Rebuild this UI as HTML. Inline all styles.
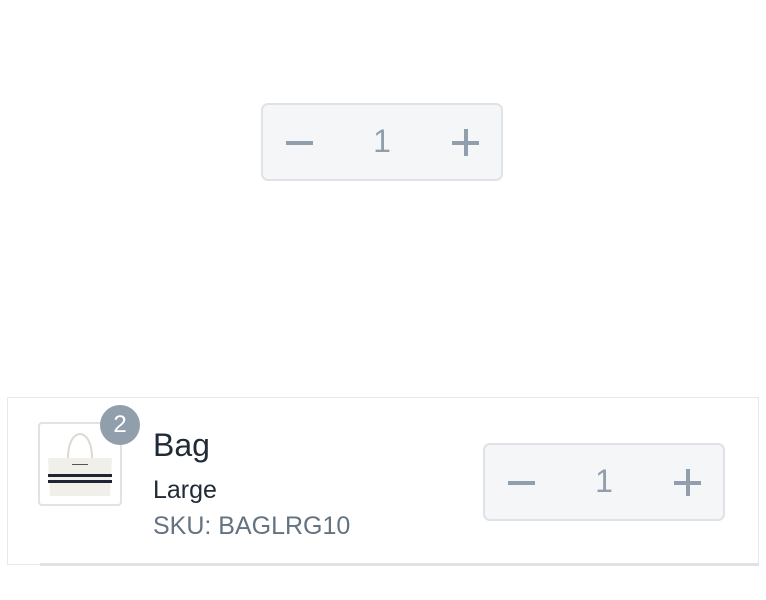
<!DOCTYPE html>
<html><head><style>
body{margin:0;width:766px;height:600px;background:#fff;font-family:"Liberation Sans",sans-serif;position:relative;overflow:hidden}
.st{position:absolute;width:238px;height:74px;border:2px solid #dfe3e8;border-radius:7px;background:#f4f6f8;box-sizing:content-box}
.st .m{position:absolute;left:23px;top:36px;width:27px;height:4px;background:#919eab}
.st .p1{position:absolute;left:189px;top:36px;width:27px;height:4px;background:#919eab}
.st .p2{position:absolute;left:201px;top:24px;width:4px;height:27px;background:#919eab}
.st .n{position:absolute;left:0;width:238px;top:17px;text-align:center;font-size:32px;color:#919eab;line-height:38px}
.card{position:absolute;left:7px;top:397px;width:750px;height:166px;border:1px solid #e6e8eb;background:#fff}
.sh{position:absolute;left:40px;top:563px;width:719px;height:3px;background:#dfe3e6}
.img{position:absolute;left:38px;top:422px;width:80px;height:80px;border:2px solid #dfe3e8;border-radius:4px;background:#fff;overflow:hidden}
.badge{position:absolute;left:100px;top:405px;width:40px;height:40px;border-radius:50%;background:#919eab;color:#fff;font-size:24px;line-height:40px;text-align:center}
</style></head><body>
<div class="st" style="left:261px;top:103px"><div class="m"></div><div class="n">1</div><div class="p1"></div><div class="p2"></div></div>
<div class="card"></div>
<div class="sh"></div>
<div class="img">
<svg width="80" height="80" viewBox="0 0 80 80">
<path d="M28 34 C28 2 52 2 52 34" fill="none" stroke="#ddd8cf" stroke-width="2"/>
<path d="M8 34 H72 L70 72 H10 Z" fill="#f1efea"/>
<rect x="8" y="50" width="64" height="3" fill="#1e2433"/>
<rect x="8" y="56" width="64" height="3" fill="#1e2433"/>
<rect x="32" y="40" width="16" height="1" fill="#555"/>
</svg></div>
<div class="badge">2</div>
<div style="position:absolute;left:153px;top:427px;font-size:32px;color:#212b36">Bag</div>
<div style="position:absolute;left:153px;top:476px;font-size:25px;color:#212b36">Large</div>
<div style="position:absolute;left:153px;top:512px;font-size:25px;color:#637381">SKU: BAGLRG10</div>
<div class="st" style="left:483px;top:443px"><div class="m"></div><div class="n">1</div><div class="p1"></div><div class="p2"></div></div>
</body></html>
